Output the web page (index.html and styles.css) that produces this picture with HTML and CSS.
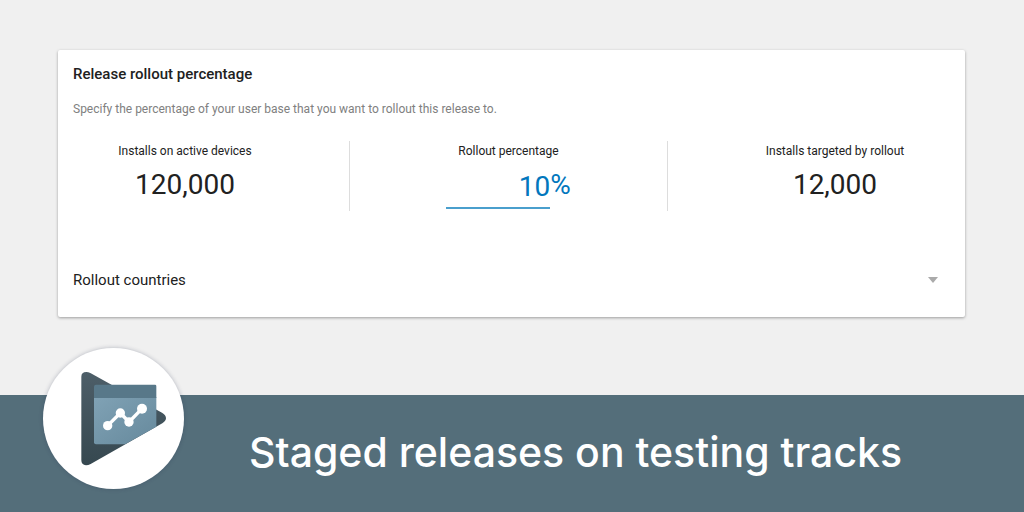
FILE: index.html
```html
<!DOCTYPE html>
<html lang="en">
<head>
<meta charset="utf-8">
<meta name="viewport" content="width=device-width, initial-scale=1">
<title>Staged releases on testing tracks</title>
<link rel="stylesheet" href="styles.css">
</head>
<body>
<main class="stage">
  <section class="card">
    <h2 class="card-title">Release rollout percentage</h2>
    <p class="card-hint">Specify the percentage of your user base that you want to rollout this release to.</p>
    <div class="stats">
      <div class="stat">
        <div class="stat-label">Installs on active devices</div>
        <div class="stat-value">120,000</div>
      </div>
      <div class="stat stat-middle">
        <label class="stat-label" for="rollout">Rollout percentage</label>
        <div class="percent"><input class="percent-input" id="rollout" type="text" inputmode="numeric" value="10"><span class="percent-sign">%</span></div>
      </div>
      <div class="stat">
        <div class="stat-label">Installs targeted by rollout</div>
        <div class="stat-value">12,000</div>
      </div>
    </div>
    <button class="countries" type="button" aria-expanded="false">
      <span>Rollout countries</span>
      <svg class="caret" viewBox="0 0 10 6" aria-hidden="true"><path d="M0 0H10L5 6Z"/></svg>
    </button>
  </section>
</main>
<footer class="banner">
  <div class="logo">
    <svg viewBox="39 39 423 423" role="img" aria-label="Play Console">
      <defs>
        <linearGradient id="dark" x1="0" y1="0" x2="0" y2="1"><stop offset="0" stop-color="#4d5e68"/><stop offset="1" stop-color="#364850"/></linearGradient>
        <linearGradient id="pane" x1="0" y1="0" x2="1" y2="1"><stop offset="0" stop-color="#80a2b5"/><stop offset="1" stop-color="#66899c"/></linearGradient>
      </defs>
      <path fill="url(#dark)" d="M154 125Q154 111 169 111Q175 111 181 114L396 233Q408 240 408 250Q408 258 397 265L182 387Q175 391 168 391Q154 389 154 376Z"/>
      <path fill="url(#pane)" d="M192 186H379V275L285 328H198Q192 328 192 322Z"/>
      <path fill="#587889" d="M192 155Q192 149 198 149H375Q379 149 379 153V189H192Z"/>
      <path fill="none" stroke="#fff" stroke-width="10" d="M233 272L271 234L297 261L336 221"/>
      <g fill="#fff"><circle cx="233" cy="272" r="14"/><circle cx="271" cy="234" r="14"/><circle cx="297" cy="261" r="14"/><circle cx="336" cy="221" r="15"/></g>
    </svg>
  </div>
  <h1 class="headline">Staged releases on testing tracks</h1>
</footer>
</body>
</html>
```
FILE: styles.css
```css
* { box-sizing: border-box; }
body {
  margin: 0;
  min-height: 100vh;
  display: flex;
  flex-direction: column;
  background: #f0f0f0;
  color: #212121;
  font-family: Roboto, sans-serif;
}
.stage { flex: 1; padding: 50px 59px 78px 58px; }
.card {
  background: #fff;
  border-radius: 2px;
  box-shadow: 0 1px 3px rgba(0, 0, 0, 0.35);
  padding-bottom: 17px;
}
.card-title {
  margin: 0;
  padding: 12px 15px 0;
  font-size: 15px;
  line-height: 24px;
  font-weight: 500;
}
.card-hint {
  margin: 13px 0 0;
  padding: 0 15px;
  font-size: 12px;
  line-height: 20px;
  color: #808080;
}
.stats {
  display: grid;
  grid-template-columns: 291fr 319fr 297fr;
  margin-top: 22px;
}
.stat {
  display: flex;
  flex-direction: column;
  align-items: center;
  height: 70px;
}
.stat:first-child { padding-right: 37px; }
.stat:last-child { padding-left: 37px; }
.stat-middle { border-left: 1px solid #ddd; border-right: 1px solid #ddd; }
.stat-label { font-size: 12px; line-height: 20px; }
.stat-value { font-size: 28px; line-height: 48px; }
.percent { display: flex; align-items: center; color: #0277bd; }
.percent-input {
  width: 104px;
  height: 47px;
  padding: 4px 0 0;
  border: 0;
  border-bottom: 2px solid #4a9fcd;
  background: none;
  color: inherit;
  font: inherit;
  font-size: 28px;
  text-align: right;
  outline: 0;
}
.percent-sign { font-size: 28px; line-height: 48px; }
.countries {
  display: flex;
  justify-content: space-between;
  align-items: center;
  width: 100%;
  margin-top: 49px;
  padding: 8px 27px 8px 15px;
  border: 0;
  background: none;
  color: inherit;
  font: inherit;
  font-size: 15px;
  line-height: 24px;
  text-align: left;
}
.caret { width: 10px; height: 6px; fill: #aaa; }
.banner {
  display: flex;
  align-items: center;
  gap: 65px;
  height: 117px;
  padding-left: 43px;
  padding-bottom: 4px;
  background: #546e7a;
  color: #fff;
}
.logo {
  flex: none;
  width: 141px;
  height: 141px;
  margin-bottom: 66px;
  border-radius: 50%;
  background: #fff;
  box-shadow: 0 0 4px rgba(40, 50, 80, 0.3);
}
.logo svg { display: block; width: 100%; }
.headline {
  margin: 0;
  font-family: Inter, sans-serif;
  font-size: 41px;
  line-height: 56px;
  font-weight: 500;
}
```
